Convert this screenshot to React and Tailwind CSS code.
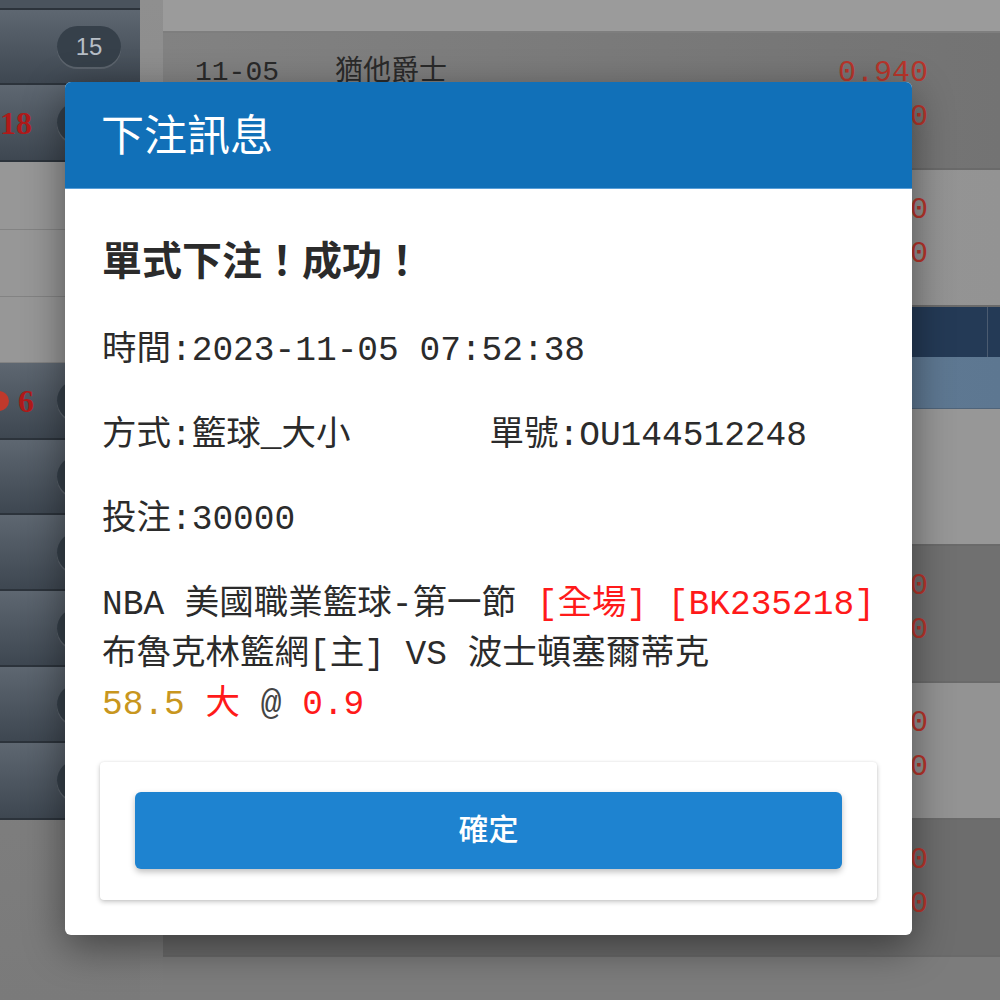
import React from "react";

const MONO = "font-['Liberation_Mono','Noto_Sans_CJK_TC',monospace]";

function DarkRow({ h, children, badge }) {
  return (
    <div
      className={`${h} shrink-0 flex items-center bg-gradient-to-b from-[#5e6771] to-[#3e4751] border-b-2 border-[#2c333b]`}
    >
      <div className="w-[57px] h-full flex items-center">{children}</div>
      <div className="w-[64px] h-[41px] rounded-full bg-[#36404a] shadow-[0_2px_0_rgba(255,255,255,0.12)] flex items-center justify-center text-[24px] text-[#b7bec6] font-['Liberation_Sans',sans-serif]">
        {badge}
      </div>
    </div>
  );
}

function LightRow({ h }) {
  return <div className={`${h} shrink-0 bg-[#979797] border-b border-[#838383]`} />;
}

function OddsRow({ bg, date, team, top, bottom }) {
  return (
    <div className={`h-[137px] shrink-0 ${bg} border-b-2 border-[#6a6a6a] pt-[18px] pl-[32px] pr-[72px] ${MONO}`}>
      <div className="flex items-center justify-between h-[44px] text-[28px]">
        <div className="flex gap-[56px] text-[#2a2a2a]">
          <span>{date}</span>
          <span>{team}</span>
        </div>
        <span className="text-[#b8352b] text-[30px]">{top}</span>
      </div>
      <div className="flex items-center justify-end h-[44px]">
        <span className="text-[#b8352b] text-[30px]">{bottom}</span>
      </div>
    </div>
  );
}

export default function App() {
  return (
    <div className="relative w-[1000px] h-[1000px] overflow-hidden flex bg-[#7f7f7f]">
      {/* sidebar */}
      <aside className="w-[140px] flex flex-col bg-gradient-to-b from-[#8c8c8c] to-[#7a7a7a]">
        <div className="h-[10px] shrink-0 bg-[#4a535d] border-b-2 border-[#2c333b]" />
        <DarkRow h="h-[75px]" badge="15" />
        <DarkRow h="h-[77px]" badge="">
          <span className="text-[32px] font-bold text-[#b01a1a] font-['Liberation_Serif',serif] leading-none">18</span>
        </DarkRow>
        <LightRow h="h-[68px]" />
        <LightRow h="h-[67px]" />
        <LightRow h="h-[66px]" />
        <DarkRow h="h-[77px]" badge="">
          <span className="w-[20px] h-[20px] -ml-[11px] rounded-full bg-[#c0392b]" />
          <span className="ml-[9px] text-[32px] font-bold text-[#b01a1a] font-['Liberation_Serif',serif] leading-none">6</span>
        </DarkRow>
        <DarkRow h="h-[75px]" badge="" />
        <DarkRow h="h-[76px]" badge="" />
        <DarkRow h="h-[76px]" badge="" />
        <DarkRow h="h-[76px]" badge="" />
        <DarkRow h="h-[77px]" badge="" />
      </aside>

      <div className="w-[23px] bg-gradient-to-b from-[#8f8f8f] to-[#7c7c7c]" />

      {/* main list */}
      <main className="flex-1 flex flex-col bg-[#7c7c7c]">
        <div className="h-[33px] shrink-0 bg-[#9b9b9b] border-b-2 border-[#7e7e7e]" />
        <OddsRow bg="bg-gradient-to-r from-[#828282] to-[#737373]" date="11-05" team="猶他爵士" top="0.940" bottom="0" />
        <OddsRow bg="bg-gradient-to-r from-[#9c9c9c] to-[#939393]" date="11-05" team="鳳凰城太陽" top="0" bottom="0" />
        <div className="h-[50px] shrink-0 flex bg-[#243a56]">
          <div className="flex-1 border-r border-[#4b5b70]" />
          <div className="w-[12px]" />
        </div>
        <div className="h-[52px] shrink-0 bg-gradient-to-r from-[#6a849e] to-[#5d7791] border-b border-[#4f647a]" />
        <div className="h-[137px] shrink-0 bg-[#979797] border-b-2 border-[#6a6a6a]" />
        <OddsRow bg="bg-[#707070]" date="11-05" team="布魯克林籃網" top="0" bottom="0" />
        <OddsRow bg="bg-[#939393]" date="11-05" team="波士頓塞爾蒂克" top="0" bottom="0" />
        <OddsRow bg="bg-[#6d6d6d]" date="11-05" team="邁阿密熱火" top="0" bottom="0" />
      </main>

      {/* bet result dialog */}
      <div className="absolute left-[65px] top-[82px] w-[847px] h-[853px] bg-white rounded-[6px] overflow-hidden shadow-[0_12px_40px_rgba(0,0,0,0.45)] flex flex-col">
        <div className="h-[107px] shrink-0 bg-[#1170b8] border-b border-[#5a9fd8] flex items-center px-[36px] pb-[6px]">
          <h2 className="text-white text-[43px] font-normal font-['Noto_Sans_CJK_TC',sans-serif]">下注訊息</h2>
        </div>

        <div className="px-[35px] pt-[44px] text-[#2b2b2b]">
          <div className={`pl-[2px] text-[34.5px] leading-[50px] ${MONO}`}>
            <h3 className="text-[40px] leading-[50px] font-bold font-['Noto_Sans_CJK_TC',sans-serif] mb-[43px]">
              單式下注！成功！
            </h3>
            <p>時間:2023-11-05 07:52:38</p>
            <div className="grid grid-cols-2 mt-[35px]">
              <p>方式:籃球_大小</p>
              <p>單號:OU144512248</p>
            </div>
            <p className="mt-[34px]">投注:30000</p>
            <div className="mt-[35px] whitespace-nowrap">
              <p>
                NBA 美國職業籃球-第一節 <span className="text-[#ff1a1a]">[全場] [BK235218]</span>
              </p>
              <p>布魯克林籃網[主] VS 波士頓塞爾蒂克</p>
              <p>
                <span className="text-[#c8961e]">58.5</span> <span className="text-[#ff1a1a]">大</span>{" "}
                <span className="text-[#444]">@</span> <span className="text-[#ff1a1a]">0.9</span>
              </p>
            </div>
          </div>

          <div className="mt-[32px] bg-white rounded-[4px] px-[35px] pt-[30px] pb-[31px] shadow-[0_2px_5px_rgba(0,0,0,0.22),0_0_2px_rgba(0,0,0,0.08)]">
            <button className="w-full h-[77px] pb-[6px] rounded-[6px] bg-[#1e83d0] text-white text-[30px] font-medium font-['Noto_Sans_CJK_TC',sans-serif] shadow-[0_3px_6px_rgba(0,0,0,0.25)]">
              確定
            </button>
          </div>
        </div>
      </div>
    </div>
  );
}
